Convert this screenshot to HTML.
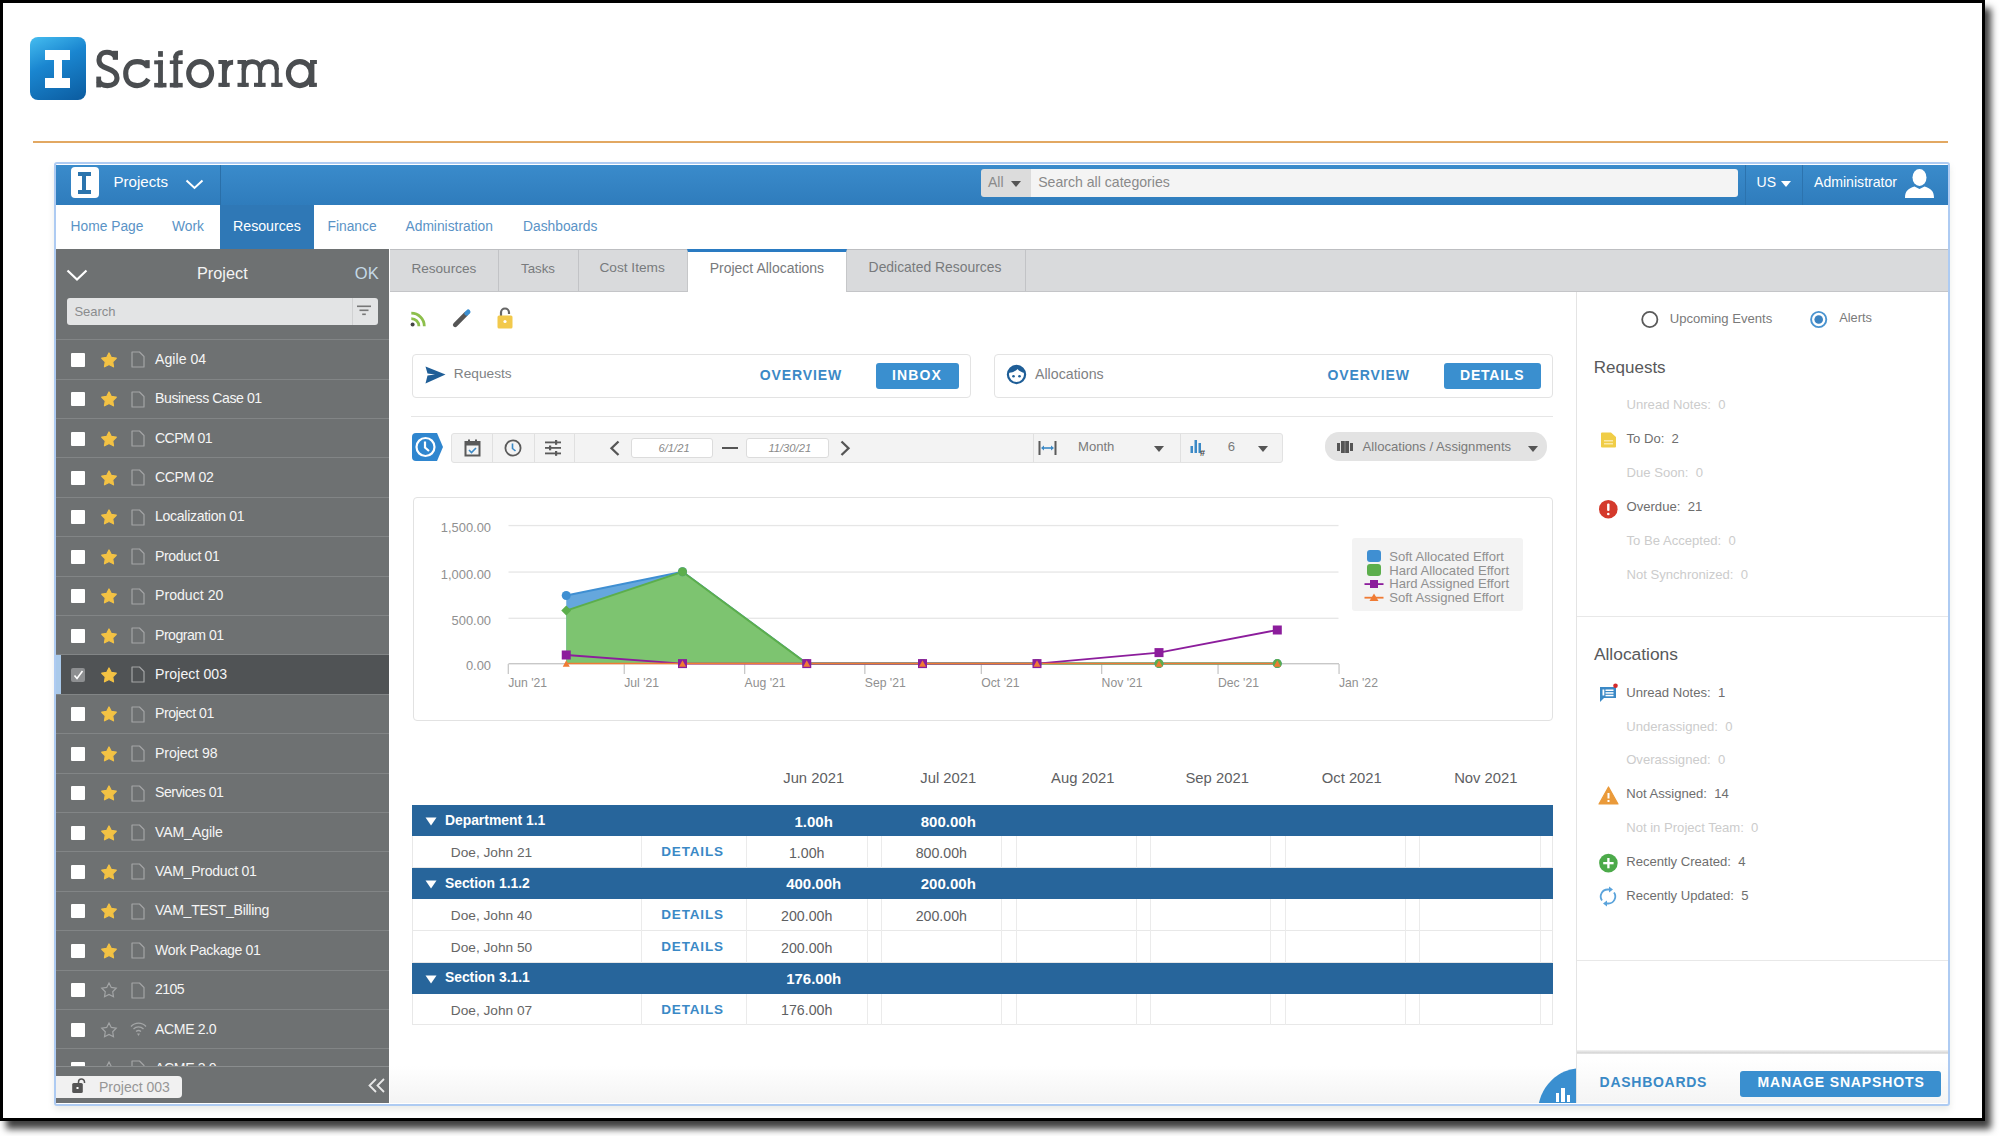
<!DOCTYPE html>
<html><head><meta charset="utf-8">
<style>
*{box-sizing:border-box;margin:0;padding:0}
html,body{width:2000px;height:1136px;overflow:hidden;background:#fff;font-family:"Liberation Sans",sans-serif}
.a{position:absolute}
.t{position:absolute;white-space:nowrap;line-height:1}
svg{position:absolute;overflow:visible}
</style></head><body>
<div class="a" style="left:0;top:0;width:1985px;height:1121px;border:3px solid #000;box-shadow:6px 8px 7px rgba(0,0,0,.75)"></div>
<div class="a" style="left:30.0px;top:37.0px;width:56.0px;height:63.0px;border-radius:8px;background:linear-gradient(155deg,#45bdf0 0%,#1a86d0 40%,#0b5b9f 100%)"></div>
<div class="a" style="left:45.0px;top:50.0px;width:25.0px;height:10.0px;background:#fff"></div>
<div class="a" style="left:53.5px;top:50.0px;width:8.5px;height:38.0px;background:#fff"></div>
<div class="a" style="left:45.0px;top:78.0px;width:25.0px;height:10.0px;background:#fff"></div>
<svg style="left:0;top:0" width="330" height="100" viewBox="0 0 330 100"><g fill="#4a4d50"><path d="M115.2,56.5 C113,53.5 110,52.3 107,52.3 C101.5,52.3 99,55.5 99,60 C99,65 102.5,66.8 107.5,68.5 C113.5,70.5 117,72.8 117,78 C117,83 112.5,85.6 107.5,85.6 C103,85.6 100,84 98.7,81" fill="none" stroke="#4a4d50" stroke-width="5.1"/><rect x="112.8" y="50.8" width="5.2" height="9"/><rect x="96.3" y="76.6" width="4.8" height="10.8"/><path d="M146.8,66.2 C145,62.8 141.5,61.6 137.2,61.6 C130,61.6 125.7,66.5 125.7,73.6 C125.7,80.7 130,85.6 137.2,85.6 C142,85.6 145.6,83.5 148.4,79" fill="none" stroke="#4a4d50" stroke-width="5.1"/><rect x="145.2" y="60.1" width="4.5" height="8.1"/><rect x="158.1" y="51.1" width="4.8" height="5.7"/><rect x="158.1" y="60.4" width="4.8" height="27"/><rect x="154.2" y="60.4" width="8.7" height="3.9"/><rect x="154.2" y="82.9" width="12.3" height="4.5"/><rect x="173.4" y="56" width="4.8" height="31.5"/><path d="M175.8,58 C175.8,53.5 177.5,52.45 182.7,52.45" fill="none" stroke="#4a4d50" stroke-width="5.1"/><rect x="169.8" y="60.4" width="12.9" height="3.6"/><rect x="169.8" y="82.9" width="12.9" height="4.5"/><ellipse cx="200.15" cy="73.6" rx="11.45" ry="12" fill="none" stroke="#4a4d50" stroke-width="5.1"/><rect x="221.9" y="60" width="5" height="27"/><rect x="218.4" y="60" width="8.5" height="4"/><rect x="218.4" y="82.8" width="11.3" height="4.1"/><path d="M224.4,71 C225.5,64 228.5,62.3 233.1,62.3" fill="none" stroke="#4a4d50" stroke-width="5.1"/><rect x="241.6" y="60" width="4.3" height="27"/><rect x="258.1" y="68" width="4.1" height="19"/><rect x="274.7" y="68" width="4.05" height="19"/><rect x="237.5" y="60" width="8.4" height="4"/><rect x="237.5" y="82.8" width="11.25" height="4.1"/><rect x="254" y="82.8" width="11.6" height="4.1"/><rect x="271.25" y="82.8" width="11.25" height="4.1"/><path d="M243.75,70 C244.5,63.5 248,61.6 252,61.6 C257,61.6 260.15,63.5 260.15,69.5" fill="none" stroke="#4a4d50" stroke-width="4.6"/><path d="M260.15,70 C261,63.5 264.5,61.6 268.5,61.6 C273.5,61.6 276.7,63.5 276.7,69.5" fill="none" stroke="#4a4d50" stroke-width="4.6"/><ellipse cx="299.8" cy="73.6" rx="11.4" ry="12" fill="none" stroke="#4a4d50" stroke-width="5.1"/><rect x="310" y="60" width="4.4" height="27"/><rect x="310" y="60" width="6.9" height="4"/><rect x="309" y="82.8" width="7.9" height="4.1"/></g></svg>
<div class="a" style="left:33.0px;top:141.0px;width:1915.0px;height:2.0px;background:#e2a862"></div>
<div class="a" style="left:54.0px;top:162.0px;width:1896.0px;height:944.0px;border:2px solid #aecbf2;border-radius:3px;background:#fff;box-shadow:0 4px 6px rgba(120,130,110,.15)"></div>
<div class="a" style="left:56.0px;top:164.5px;width:1892.0px;height:40.0px;background:linear-gradient(#3a8bcb,#2f7cbc)"></div>
<div class="a" style="left:70.6px;top:166.8px;width:28.0px;height:31.0px;background:#fff;border-radius:4px"></div>
<div class="a" style="left:78.0px;top:171.5px;width:12.5px;height:4.0px;background:#2b74ad"></div>
<div class="a" style="left:82.3px;top:171.5px;width:4.0px;height:22.0px;background:#2b74ad"></div>
<div class="a" style="left:78.0px;top:189.5px;width:12.5px;height:4.0px;background:#2b74ad"></div>
<div class="t" style="left:113.5px;top:174.4px;font-size:15.1px;color:#fff;">Projects</div>
<svg style="left:185px;top:179px" width="19" height="11"><polyline points="1.5,1.5 9.5,9 17.5,1.5" fill="none" stroke="#fff" stroke-width="2"/></svg>
<div class="a" style="left:220.0px;top:164.5px;width:1.0px;height:40.0px;background:#2a6fa8"></div>
<div class="a" style="left:981.4px;top:169.2px;width:49.5px;height:27.8px;background:#dcdcdc;border-radius:3px 0 0 3px"></div>
<div class="t" style="left:988.0px;top:174.7px;font-size:14px;color:#8a8a8a;">All</div>
<svg style="left:1011px;top:181px" width="11" height="7"><polygon points="0,0 10,0 5,6" fill="#555"/></svg>
<div class="a" style="left:1030.6px;top:169.2px;width:707.0px;height:27.8px;background:#f4f4f4;border-radius:0 3px 3px 0"></div>
<div class="t" style="left:1038.2px;top:174.7px;font-size:14.1px;color:#8a8a8a;">Search all categories</div>
<div class="a" style="left:1744.5px;top:164.5px;width:1.0px;height:40.0px;background:#2c73ae"></div>
<div class="t" style="left:1756.6px;top:174.7px;font-size:14px;color:#fff;">US</div>
<svg style="left:1781px;top:181px" width="11" height="7"><polygon points="0,0 10,0 5,6" fill="#fff"/></svg>
<div class="a" style="left:1801.5px;top:164.5px;width:1.0px;height:40.0px;background:#2c73ae"></div>
<div class="t" style="left:1814.0px;top:174.7px;font-size:14.1px;color:#fff;">Administrator</div>
<svg style="left:1905px;top:169px" width="29" height="29" viewBox="0 0 29 29"><ellipse cx="14.5" cy="8.5" rx="7" ry="8.5" fill="#fff"/><path d="M0,29 C0,22 3,19.5 9.5,17.5 L14.5,20 L19.5,17.5 C26,19.5 29,22 29,29 Z" fill="#fff"/></svg>
<div class="a" style="left:220.0px;top:204.5px;width:94.0px;height:44.5px;background:#2f78b6"></div>
<div class="t" style="left:70.6px;top:219.5px;font-size:13.8px;color:#5a93c6;">Home Page</div>
<div class="t" style="left:172.0px;top:219.5px;font-size:13.8px;color:#5a93c6;">Work</div>
<div class="t" style="left:327.5px;top:219.5px;font-size:13.8px;color:#5a93c6;">Finance</div>
<div class="t" style="left:405.5px;top:219.5px;font-size:13.8px;color:#5a93c6;">Administration</div>
<div class="t" style="left:523.0px;top:219.5px;font-size:13.8px;color:#5a93c6;">Dashboards</div>
<div class="t" style="left:233.0px;top:219.2px;font-size:14.2px;color:#fff;">Resources</div>
<div class="a" style="left:56.0px;top:249.0px;width:333.0px;height:854.0px;background:#6e7172"></div>
<svg style="left:66px;top:269px" width="22" height="13"><polyline points="1.5,1.5 11,10.5 20.5,1.5" fill="none" stroke="#fff" stroke-width="2.2"/></svg>
<div class="t" style="left:197.0px;top:264.8px;font-size:16.3px;color:#f4f4f4;">Project</div>
<div class="t" style="left:354.8px;top:264.6px;font-size:16.5px;color:#c5d9e6;">OK</div>
<div class="a" style="left:67.4px;top:297.6px;width:310.5px;height:27.2px;background:#e3e4e5;border-radius:3px"></div>
<div class="a" style="left:352.0px;top:298.0px;width:1.0px;height:26.5px;background:#d0d1d2"></div>
<div class="t" style="left:74.4px;top:304.6px;font-size:13px;color:#8a8c8e;">Search</div>
<svg style="left:357px;top:305px" width="15" height="12"><rect x="0" y="0.5" width="14" height="1.6" fill="#777"/><rect x="2.5" y="4.5" width="9" height="1.6" fill="#777"/><rect x="5.2" y="8.5" width="3.6" height="1.6" fill="#777"/></svg>
<div class="a" style="left:56px;top:339px;width:333px;height:727px;overflow:hidden">
<div class="a" style="left:0.0px;top:0.2px;width:333.0px;height:1.0px;background:#828586"></div>
<div class="a" style="left:15.0px;top:13.7px;width:14.0px;height:14.0px;background:#fff;border-radius:1px"></div>
<svg style="left:45px;top:12.7px" width="16" height="16" viewBox="0 0 16 16"><path d="M8.00,1.00 L10.29,5.44 L15.23,6.25 L11.71,9.81 L12.47,14.75 L8.00,12.50 L3.53,14.75 L4.29,9.81 L0.77,6.25 L5.71,5.44 Z" fill="#f3c244" stroke="#f3c244" stroke-width="1.3" stroke-linejoin="round"/></svg>
<svg style="left:75px;top:12.2px" width="14" height="17" viewBox="0 0 14 17"><path d="M1,1 L8.5,1 L13,5.5 L13,16 L1,16 Z" fill="none" stroke="#a3a5a6" stroke-width="1.2" stroke-linejoin="round"/></svg>
<div class="t" style="left:99.0px;top:12.7px;font-size:14.1px;color:#f5f5f5;letter-spacing:0.04px">Agile 04</div>
<div class="a" style="left:0.0px;top:39.6px;width:333.0px;height:1.0px;background:#828586"></div>
<div class="a" style="left:15.0px;top:53.1px;width:14.0px;height:14.0px;background:#fff;border-radius:1px"></div>
<svg style="left:45px;top:52.1px" width="16" height="16" viewBox="0 0 16 16"><path d="M8.00,1.00 L10.29,5.44 L15.23,6.25 L11.71,9.81 L12.47,14.75 L8.00,12.50 L3.53,14.75 L4.29,9.81 L0.77,6.25 L5.71,5.44 Z" fill="#f3c244" stroke="#f3c244" stroke-width="1.3" stroke-linejoin="round"/></svg>
<svg style="left:75px;top:51.6px" width="14" height="17" viewBox="0 0 14 17"><path d="M1,1 L8.5,1 L13,5.5 L13,16 L1,16 Z" fill="none" stroke="#a3a5a6" stroke-width="1.2" stroke-linejoin="round"/></svg>
<div class="t" style="left:99.0px;top:52.1px;font-size:14.1px;color:#f5f5f5;letter-spacing:-0.43px">Business Case 01</div>
<div class="a" style="left:0.0px;top:79.0px;width:333.0px;height:1.0px;background:#828586"></div>
<div class="a" style="left:15.0px;top:92.5px;width:14.0px;height:14.0px;background:#fff;border-radius:1px"></div>
<svg style="left:45px;top:91.5px" width="16" height="16" viewBox="0 0 16 16"><path d="M8.00,1.00 L10.29,5.44 L15.23,6.25 L11.71,9.81 L12.47,14.75 L8.00,12.50 L3.53,14.75 L4.29,9.81 L0.77,6.25 L5.71,5.44 Z" fill="#f3c244" stroke="#f3c244" stroke-width="1.3" stroke-linejoin="round"/></svg>
<svg style="left:75px;top:91.0px" width="14" height="17" viewBox="0 0 14 17"><path d="M1,1 L8.5,1 L13,5.5 L13,16 L1,16 Z" fill="none" stroke="#a3a5a6" stroke-width="1.2" stroke-linejoin="round"/></svg>
<div class="t" style="left:99.0px;top:91.5px;font-size:14.1px;color:#f5f5f5;letter-spacing:-0.6px">CCPM 01</div>
<div class="a" style="left:0.0px;top:118.4px;width:333.0px;height:1.0px;background:#828586"></div>
<div class="a" style="left:15.0px;top:131.9px;width:14.0px;height:14.0px;background:#fff;border-radius:1px"></div>
<svg style="left:45px;top:130.9px" width="16" height="16" viewBox="0 0 16 16"><path d="M8.00,1.00 L10.29,5.44 L15.23,6.25 L11.71,9.81 L12.47,14.75 L8.00,12.50 L3.53,14.75 L4.29,9.81 L0.77,6.25 L5.71,5.44 Z" fill="#f3c244" stroke="#f3c244" stroke-width="1.3" stroke-linejoin="round"/></svg>
<svg style="left:75px;top:130.4px" width="14" height="17" viewBox="0 0 14 17"><path d="M1,1 L8.5,1 L13,5.5 L13,16 L1,16 Z" fill="none" stroke="#a3a5a6" stroke-width="1.2" stroke-linejoin="round"/></svg>
<div class="t" style="left:99.0px;top:130.9px;font-size:14.1px;color:#f5f5f5;letter-spacing:-0.37px">CCPM 02</div>
<div class="a" style="left:0.0px;top:157.8px;width:333.0px;height:1.0px;background:#828586"></div>
<div class="a" style="left:15.0px;top:171.3px;width:14.0px;height:14.0px;background:#fff;border-radius:1px"></div>
<svg style="left:45px;top:170.3px" width="16" height="16" viewBox="0 0 16 16"><path d="M8.00,1.00 L10.29,5.44 L15.23,6.25 L11.71,9.81 L12.47,14.75 L8.00,12.50 L3.53,14.75 L4.29,9.81 L0.77,6.25 L5.71,5.44 Z" fill="#f3c244" stroke="#f3c244" stroke-width="1.3" stroke-linejoin="round"/></svg>
<svg style="left:75px;top:169.8px" width="14" height="17" viewBox="0 0 14 17"><path d="M1,1 L8.5,1 L13,5.5 L13,16 L1,16 Z" fill="none" stroke="#a3a5a6" stroke-width="1.2" stroke-linejoin="round"/></svg>
<div class="t" style="left:99.0px;top:170.3px;font-size:14.1px;color:#f5f5f5;letter-spacing:-0.31px">Localization 01</div>
<div class="a" style="left:0.0px;top:197.2px;width:333.0px;height:1.0px;background:#828586"></div>
<div class="a" style="left:15.0px;top:210.7px;width:14.0px;height:14.0px;background:#fff;border-radius:1px"></div>
<svg style="left:45px;top:209.7px" width="16" height="16" viewBox="0 0 16 16"><path d="M8.00,1.00 L10.29,5.44 L15.23,6.25 L11.71,9.81 L12.47,14.75 L8.00,12.50 L3.53,14.75 L4.29,9.81 L0.77,6.25 L5.71,5.44 Z" fill="#f3c244" stroke="#f3c244" stroke-width="1.3" stroke-linejoin="round"/></svg>
<svg style="left:75px;top:209.2px" width="14" height="17" viewBox="0 0 14 17"><path d="M1,1 L8.5,1 L13,5.5 L13,16 L1,16 Z" fill="none" stroke="#a3a5a6" stroke-width="1.2" stroke-linejoin="round"/></svg>
<div class="t" style="left:99.0px;top:209.7px;font-size:14.1px;color:#f5f5f5;letter-spacing:-0.38px">Product 01</div>
<div class="a" style="left:0.0px;top:236.6px;width:333.0px;height:1.0px;background:#828586"></div>
<div class="a" style="left:15.0px;top:250.1px;width:14.0px;height:14.0px;background:#fff;border-radius:1px"></div>
<svg style="left:45px;top:249.1px" width="16" height="16" viewBox="0 0 16 16"><path d="M8.00,1.00 L10.29,5.44 L15.23,6.25 L11.71,9.81 L12.47,14.75 L8.00,12.50 L3.53,14.75 L4.29,9.81 L0.77,6.25 L5.71,5.44 Z" fill="#f3c244" stroke="#f3c244" stroke-width="1.3" stroke-linejoin="round"/></svg>
<svg style="left:75px;top:248.6px" width="14" height="17" viewBox="0 0 14 17"><path d="M1,1 L8.5,1 L13,5.5 L13,16 L1,16 Z" fill="none" stroke="#a3a5a6" stroke-width="1.2" stroke-linejoin="round"/></svg>
<div class="t" style="left:99.0px;top:249.1px;font-size:14.1px;color:#f5f5f5;letter-spacing:0.02px">Product 20</div>
<div class="a" style="left:0.0px;top:276.0px;width:333.0px;height:1.0px;background:#828586"></div>
<div class="a" style="left:15.0px;top:289.5px;width:14.0px;height:14.0px;background:#fff;border-radius:1px"></div>
<svg style="left:45px;top:288.5px" width="16" height="16" viewBox="0 0 16 16"><path d="M8.00,1.00 L10.29,5.44 L15.23,6.25 L11.71,9.81 L12.47,14.75 L8.00,12.50 L3.53,14.75 L4.29,9.81 L0.77,6.25 L5.71,5.44 Z" fill="#f3c244" stroke="#f3c244" stroke-width="1.3" stroke-linejoin="round"/></svg>
<svg style="left:75px;top:288.0px" width="14" height="17" viewBox="0 0 14 17"><path d="M1,1 L8.5,1 L13,5.5 L13,16 L1,16 Z" fill="none" stroke="#a3a5a6" stroke-width="1.2" stroke-linejoin="round"/></svg>
<div class="t" style="left:99.0px;top:288.5px;font-size:14.1px;color:#f5f5f5;letter-spacing:-0.51px">Program 01</div>
<div class="a" style="left:0.0px;top:315.9px;width:333.0px;height:39.4px;background:#505355"></div>
<div class="a" style="left:0.0px;top:315.9px;width:5.0px;height:39.4px;background:#a9c9ea"></div>
<div class="a" style="left:0.0px;top:315.4px;width:333.0px;height:1.0px;background:#828586"></div>
<div class="a" style="left:15.0px;top:329.4px;width:14.0px;height:14.0px;background:#8d8f91;border-radius:2px"></div>
<svg style="left:17px;top:331.4px" width="11" height="10"><polyline points="1.5,5.5 4,8.5 9.5,1" fill="none" stroke="#fff" stroke-width="1.6"/></svg>
<svg style="left:45px;top:327.9px" width="16" height="16" viewBox="0 0 16 16"><path d="M8.00,1.00 L10.29,5.44 L15.23,6.25 L11.71,9.81 L12.47,14.75 L8.00,12.50 L3.53,14.75 L4.29,9.81 L0.77,6.25 L5.71,5.44 Z" fill="#f3c244" stroke="#f3c244" stroke-width="1.3" stroke-linejoin="round"/></svg>
<svg style="left:75px;top:327.4px" width="14" height="17" viewBox="0 0 14 17"><path d="M1,1 L8.5,1 L13,5.5 L13,16 L1,16 Z" fill="none" stroke="#a3a5a6" stroke-width="1.2" stroke-linejoin="round"/></svg>
<div class="t" style="left:99.0px;top:327.9px;font-size:14.1px;color:#f5f5f5;letter-spacing:0.08px">Project 003</div>
<div class="a" style="left:0.0px;top:354.8px;width:333.0px;height:1.0px;background:#828586"></div>
<div class="a" style="left:15.0px;top:368.3px;width:14.0px;height:14.0px;background:#fff;border-radius:1px"></div>
<svg style="left:45px;top:367.3px" width="16" height="16" viewBox="0 0 16 16"><path d="M8.00,1.00 L10.29,5.44 L15.23,6.25 L11.71,9.81 L12.47,14.75 L8.00,12.50 L3.53,14.75 L4.29,9.81 L0.77,6.25 L5.71,5.44 Z" fill="#f3c244" stroke="#f3c244" stroke-width="1.3" stroke-linejoin="round"/></svg>
<svg style="left:75px;top:366.8px" width="14" height="17" viewBox="0 0 14 17"><path d="M1,1 L8.5,1 L13,5.5 L13,16 L1,16 Z" fill="none" stroke="#a3a5a6" stroke-width="1.2" stroke-linejoin="round"/></svg>
<div class="t" style="left:99.0px;top:367.3px;font-size:14.1px;color:#f5f5f5;letter-spacing:-0.46px">Project 01</div>
<div class="a" style="left:0.0px;top:394.2px;width:333.0px;height:1.0px;background:#828586"></div>
<div class="a" style="left:15.0px;top:407.7px;width:14.0px;height:14.0px;background:#fff;border-radius:1px"></div>
<svg style="left:45px;top:406.7px" width="16" height="16" viewBox="0 0 16 16"><path d="M8.00,1.00 L10.29,5.44 L15.23,6.25 L11.71,9.81 L12.47,14.75 L8.00,12.50 L3.53,14.75 L4.29,9.81 L0.77,6.25 L5.71,5.44 Z" fill="#f3c244" stroke="#f3c244" stroke-width="1.3" stroke-linejoin="round"/></svg>
<svg style="left:75px;top:406.2px" width="14" height="17" viewBox="0 0 14 17"><path d="M1,1 L8.5,1 L13,5.5 L13,16 L1,16 Z" fill="none" stroke="#a3a5a6" stroke-width="1.2" stroke-linejoin="round"/></svg>
<div class="t" style="left:99.0px;top:406.7px;font-size:14.1px;color:#f5f5f5;letter-spacing:-0.1px">Project 98</div>
<div class="a" style="left:0.0px;top:433.6px;width:333.0px;height:1.0px;background:#828586"></div>
<div class="a" style="left:15.0px;top:447.1px;width:14.0px;height:14.0px;background:#fff;border-radius:1px"></div>
<svg style="left:45px;top:446.1px" width="16" height="16" viewBox="0 0 16 16"><path d="M8.00,1.00 L10.29,5.44 L15.23,6.25 L11.71,9.81 L12.47,14.75 L8.00,12.50 L3.53,14.75 L4.29,9.81 L0.77,6.25 L5.71,5.44 Z" fill="#f3c244" stroke="#f3c244" stroke-width="1.3" stroke-linejoin="round"/></svg>
<svg style="left:75px;top:445.6px" width="14" height="17" viewBox="0 0 14 17"><path d="M1,1 L8.5,1 L13,5.5 L13,16 L1,16 Z" fill="none" stroke="#a3a5a6" stroke-width="1.2" stroke-linejoin="round"/></svg>
<div class="t" style="left:99.0px;top:446.1px;font-size:14.1px;color:#f5f5f5;letter-spacing:-0.47px">Services 01</div>
<div class="a" style="left:0.0px;top:473.0px;width:333.0px;height:1.0px;background:#828586"></div>
<div class="a" style="left:15.0px;top:486.5px;width:14.0px;height:14.0px;background:#fff;border-radius:1px"></div>
<svg style="left:45px;top:485.5px" width="16" height="16" viewBox="0 0 16 16"><path d="M8.00,1.00 L10.29,5.44 L15.23,6.25 L11.71,9.81 L12.47,14.75 L8.00,12.50 L3.53,14.75 L4.29,9.81 L0.77,6.25 L5.71,5.44 Z" fill="#f3c244" stroke="#f3c244" stroke-width="1.3" stroke-linejoin="round"/></svg>
<svg style="left:75px;top:485.0px" width="14" height="17" viewBox="0 0 14 17"><path d="M1,1 L8.5,1 L13,5.5 L13,16 L1,16 Z" fill="none" stroke="#a3a5a6" stroke-width="1.2" stroke-linejoin="round"/></svg>
<div class="t" style="left:99.0px;top:485.5px;font-size:14.1px;color:#f5f5f5;letter-spacing:-0.09px">VAM_Agile</div>
<div class="a" style="left:0.0px;top:512.4px;width:333.0px;height:1.0px;background:#828586"></div>
<div class="a" style="left:15.0px;top:525.9px;width:14.0px;height:14.0px;background:#fff;border-radius:1px"></div>
<svg style="left:45px;top:524.9px" width="16" height="16" viewBox="0 0 16 16"><path d="M8.00,1.00 L10.29,5.44 L15.23,6.25 L11.71,9.81 L12.47,14.75 L8.00,12.50 L3.53,14.75 L4.29,9.81 L0.77,6.25 L5.71,5.44 Z" fill="#f3c244" stroke="#f3c244" stroke-width="1.3" stroke-linejoin="round"/></svg>
<svg style="left:75px;top:524.4px" width="14" height="17" viewBox="0 0 14 17"><path d="M1,1 L8.5,1 L13,5.5 L13,16 L1,16 Z" fill="none" stroke="#a3a5a6" stroke-width="1.2" stroke-linejoin="round"/></svg>
<div class="t" style="left:99.0px;top:524.9px;font-size:14.1px;color:#f5f5f5;letter-spacing:-0.28px">VAM_Product 01</div>
<div class="a" style="left:0.0px;top:551.8px;width:333.0px;height:1.0px;background:#828586"></div>
<div class="a" style="left:15.0px;top:565.3px;width:14.0px;height:14.0px;background:#fff;border-radius:1px"></div>
<svg style="left:45px;top:564.3px" width="16" height="16" viewBox="0 0 16 16"><path d="M8.00,1.00 L10.29,5.44 L15.23,6.25 L11.71,9.81 L12.47,14.75 L8.00,12.50 L3.53,14.75 L4.29,9.81 L0.77,6.25 L5.71,5.44 Z" fill="#f3c244" stroke="#f3c244" stroke-width="1.3" stroke-linejoin="round"/></svg>
<svg style="left:75px;top:563.8px" width="14" height="17" viewBox="0 0 14 17"><path d="M1,1 L8.5,1 L13,5.5 L13,16 L1,16 Z" fill="none" stroke="#a3a5a6" stroke-width="1.2" stroke-linejoin="round"/></svg>
<div class="t" style="left:99.0px;top:564.3px;font-size:14.1px;color:#f5f5f5;letter-spacing:-0.29px">VAM_TEST_Billing</div>
<div class="a" style="left:0.0px;top:591.2px;width:333.0px;height:1.0px;background:#828586"></div>
<div class="a" style="left:15.0px;top:604.7px;width:14.0px;height:14.0px;background:#fff;border-radius:1px"></div>
<svg style="left:45px;top:603.7px" width="16" height="16" viewBox="0 0 16 16"><path d="M8.00,1.00 L10.29,5.44 L15.23,6.25 L11.71,9.81 L12.47,14.75 L8.00,12.50 L3.53,14.75 L4.29,9.81 L0.77,6.25 L5.71,5.44 Z" fill="#f3c244" stroke="#f3c244" stroke-width="1.3" stroke-linejoin="round"/></svg>
<svg style="left:75px;top:603.2px" width="14" height="17" viewBox="0 0 14 17"><path d="M1,1 L8.5,1 L13,5.5 L13,16 L1,16 Z" fill="none" stroke="#a3a5a6" stroke-width="1.2" stroke-linejoin="round"/></svg>
<div class="t" style="left:99.0px;top:603.7px;font-size:14.1px;color:#f5f5f5;letter-spacing:-0.36px">Work Package 01</div>
<div class="a" style="left:0.0px;top:630.6px;width:333.0px;height:1.0px;background:#828586"></div>
<div class="a" style="left:15.0px;top:644.1px;width:14.0px;height:14.0px;background:#fff;border-radius:1px"></div>
<svg style="left:45px;top:643.1px" width="16" height="16" viewBox="0 0 16 16"><path d="M8.00,1.00 L10.29,5.44 L15.23,6.25 L11.71,9.81 L12.47,14.75 L8.00,12.50 L3.53,14.75 L4.29,9.81 L0.77,6.25 L5.71,5.44 Z" fill="none" stroke="#a3a5a6" stroke-width="1.2"/></svg>
<svg style="left:75px;top:642.6px" width="14" height="17" viewBox="0 0 14 17"><path d="M1,1 L8.5,1 L13,5.5 L13,16 L1,16 Z" fill="none" stroke="#a3a5a6" stroke-width="1.2" stroke-linejoin="round"/></svg>
<div class="t" style="left:99.0px;top:643.1px;font-size:14.1px;color:#f5f5f5;letter-spacing:-0.6px">2105</div>
<div class="a" style="left:0.0px;top:670.0px;width:333.0px;height:1.0px;background:#828586"></div>
<div class="a" style="left:15.0px;top:683.5px;width:14.0px;height:14.0px;background:#fff;border-radius:1px"></div>
<svg style="left:45px;top:682.5px" width="16" height="16" viewBox="0 0 16 16"><path d="M8.00,1.00 L10.29,5.44 L15.23,6.25 L11.71,9.81 L12.47,14.75 L8.00,12.50 L3.53,14.75 L4.29,9.81 L0.77,6.25 L5.71,5.44 Z" fill="none" stroke="#a3a5a6" stroke-width="1.2"/></svg>
<svg style="left:74px;top:681.5px" width="17" height="16" viewBox="0 0 17 16"><path d="M1,5.5 A10,10 0 0 1 16,5.5" fill="none" stroke="#a3a5a6" stroke-width="1.3"/><path d="M3.5,8 A7,7 0 0 1 13.5,8" fill="none" stroke="#a3a5a6" stroke-width="1.3"/><path d="M6,10.5 A4,4 0 0 1 11,10.5" fill="none" stroke="#a3a5a6" stroke-width="1.3"/><path d="M7,12.5 L10,12.5 L8.5,15 Z" fill="#a3a5a6"/></svg>
<div class="t" style="left:99.0px;top:682.5px;font-size:14.1px;color:#f5f5f5;letter-spacing:-0.39px">ACME 2.0</div>
<div class="a" style="left:0.0px;top:709.4px;width:333.0px;height:1.0px;background:#828586"></div>
<div class="a" style="left:15.0px;top:722.9px;width:14.0px;height:14.0px;background:#fff;border-radius:1px"></div>
<svg style="left:45px;top:721.9px" width="16" height="16" viewBox="0 0 16 16"><path d="M8.00,1.00 L10.29,5.44 L15.23,6.25 L11.71,9.81 L12.47,14.75 L8.00,12.50 L3.53,14.75 L4.29,9.81 L0.77,6.25 L5.71,5.44 Z" fill="none" stroke="#a3a5a6" stroke-width="1.2"/></svg>
<svg style="left:75px;top:721.4px" width="14" height="17" viewBox="0 0 14 17"><path d="M1,1 L8.5,1 L13,5.5 L13,16 L1,16 Z" fill="none" stroke="#a3a5a6" stroke-width="1.2" stroke-linejoin="round"/></svg>
<div class="t" style="left:99.0px;top:721.9px;font-size:14.1px;color:#f5f5f5;letter-spacing:-0.39px">ACME 3.0</div>
</div>
<div class="a" style="left:56.0px;top:1065.5px;width:333.0px;height:1.5px;background:#8a8d8e"></div>
<div class="a" style="left:56.0px;top:1076.0px;width:126.0px;height:22.0px;background:#f1f1f1;border-radius:0 4px 4px 0"></div>
<svg style="left:72px;top:1078px" width="14" height="16" viewBox="0 0 14 16"><rect x="0.2" y="5" width="10.6" height="10" rx="1.5" fill="#555"/><path d="M6.5,5.5 L6.5,4 A3,3 0 0 1 12.5,4 L12.5,5" fill="none" stroke="#555" stroke-width="1.5"/><rect x="4.5" y="9" width="2" height="2" fill="#fff"/></svg>
<div class="t" style="left:99.0px;top:1079.6px;font-size:14px;color:#969696;">Project 003</div>
<svg style="left:368px;top:1078px" width="18" height="15" viewBox="0 0 18 15"><polyline points="8,1 1.5,7.5 8,14" fill="none" stroke="#e8e8e8" stroke-width="1.8"/><polyline points="16,1 9.5,7.5 16,14" fill="none" stroke="#e8e8e8" stroke-width="1.8"/></svg>
<div class="a" style="left:389.5px;top:249.0px;width:1558.5px;height:42.5px;background:#d9dadc;border-top:1.5px solid #bdbec1;border-bottom:1px solid #c4c5c8"></div>
<div class="a" style="left:497.8px;top:250.0px;width:1.0px;height:41.0px;background:#c2c3c6"></div>
<div class="a" style="left:577.8px;top:250.0px;width:1.0px;height:41.0px;background:#c2c3c6"></div>
<div class="a" style="left:1024.5px;top:250.0px;width:1.0px;height:41.0px;background:#c2c3c6"></div>
<div class="a" style="left:687.3px;top:249.0px;width:160.0px;height:43.0px;background:#fff;border-top:3px solid #2a7bc2;border-left:1px solid #c6c7c9;border-right:1px solid #c6c7c9"></div>
<div class="t" style="left:411.4px;top:261.5px;font-size:13.6px;color:#787a7c;">Resources</div>
<div class="t" style="left:521.0px;top:261.7px;font-size:13.3px;color:#787a7c;">Tasks</div>
<div class="t" style="left:599.4px;top:261.4px;font-size:13.7px;color:#787a7c;">Cost Items</div>
<div class="t" style="left:709.7px;top:261.1px;font-size:14px;color:#787a7c;">Project Allocations</div>
<div class="t" style="left:868.6px;top:261.2px;font-size:13.9px;color:#787a7c;">Dedicated Resources</div>
<div class="a" style="left:1576.0px;top:291.5px;width:1.0px;height:811.0px;background:#e4e4e4"></div>
<svg style="left:410px;top:311px" width="17" height="17" viewBox="0 0 17 17"><circle cx="2.6" cy="13.6" r="2" fill="#444"/><path d="M1.3,7.6 A7.6,7.6 0 0 1 8.9,15.2" fill="none" stroke="#8dbf4b" stroke-width="2.8"/><path d="M1.3,2.2 A13,13 0 0 1 14.3,15.2" fill="none" stroke="#8dbf4b" stroke-width="2.8"/></svg>
<svg style="left:452px;top:309px" width="19" height="19" viewBox="0 0 19 19"><line x1="3.2" y1="15.8" x2="13.8" y2="5.2" stroke="#555" stroke-width="4.6" stroke-linecap="round"/><line x1="14.6" y1="4.4" x2="16.2" y2="2.8" stroke="#3c8fd0" stroke-width="4.6" stroke-linecap="round"/></svg>
<svg style="left:496px;top:307px" width="18" height="22" viewBox="0 0 18 22"><path d="M5,9 L5,5.5 A4,4 0 0 1 13,5.5 L13,7" fill="none" stroke="#666" stroke-width="2.2"/><rect x="1.5" y="8.5" width="15" height="13" rx="1.5" fill="#f2c94c"/><circle cx="9" cy="14.5" r="1.6" fill="#fff"/></svg>
<div class="a" style="left:412.0px;top:354.0px;width:559.0px;height:44.0px;border:1.5px solid #e3e3e3;border-radius:4px;background:#fff"></div>
<svg style="left:425px;top:366px" width="21" height="18" viewBox="0 0 21 18"><path d="M0.5,0.5 L20.5,8.5 L0.5,17.5 L2.5,9.5 L10,8.5 L2.5,7.5 Z" fill="#1f5e97"/></svg>
<div class="t" style="left:453.8px;top:367.0px;font-size:13.7px;color:#808284;">Requests</div>
<div class="t" style="left:759.8px;top:367.7px;font-size:14px;color:#3b89c6;font-weight:bold;letter-spacing:0.9px">OVERVIEW</div>
<div class="a" style="left:875.6px;top:362.6px;width:83.1px;height:26.8px;background:#3a8fcf;border-radius:3px"></div>
<div class="t" style="left:891.9px;top:367.7px;font-size:14px;color:#fff;font-weight:bold;letter-spacing:1.15px">INBOX</div>
<div class="a" style="left:993.5px;top:354.0px;width:559.5px;height:44.0px;border:1.5px solid #e3e3e3;border-radius:4px;background:#fff"></div>
<svg style="left:1006px;top:364px" width="21" height="21" viewBox="0 0 21 21"><circle cx="10.5" cy="10.5" r="8.6" fill="#fff" stroke="#1f5e97" stroke-width="2.2"/><path d="M2.2,9 C3,3.5 7,1.8 10.5,1.8 C14,1.8 18,3.5 18.8,9 C16,8.5 13,7 11.5,5 C10,7 6,8.8 2.2,9 Z" fill="#1f5e97"/><circle cx="7.5" cy="12.2" r="1.3" fill="#1f5e97"/><circle cx="13.5" cy="12.2" r="1.3" fill="#1f5e97"/></svg>
<div class="t" style="left:1035.0px;top:366.6px;font-size:14.2px;color:#808284;">Allocations</div>
<div class="t" style="left:1327.5px;top:367.7px;font-size:14px;color:#3b89c6;font-weight:bold;letter-spacing:0.9px">OVERVIEW</div>
<div class="a" style="left:1444.0px;top:362.6px;width:97.0px;height:26.8px;background:#3a8fcf;border-radius:3px"></div>
<div class="t" style="left:1460.0px;top:367.7px;font-size:14px;color:#fff;font-weight:bold;letter-spacing:0.77px">DETAILS</div>
<div class="a" style="left:411.0px;top:415.5px;width:1142.0px;height:1.5px;background:#e6e6e6"></div>
<svg style="left:411px;top:432px" width="33" height="30" viewBox="0 0 33 30"><path d="M5,1 L26,1 L32,15 L26,29 L5,29 A4,4 0 0 1 1,25 L1,5 A4,4 0 0 1 5,1 Z" fill="#2f86cf"/><circle cx="14.5" cy="15" r="9" fill="none" stroke="#fff" stroke-width="2.2"/><polyline points="14,9.5 14,15.5 18,19" fill="none" stroke="#fff" stroke-width="2.2"/></svg>
<div class="a" style="left:451.0px;top:432.5px;width:832.0px;height:30.3px;background:#f3f3f3;border:1px solid #e2e2e2;border-radius:3px"></div>
<div class="a" style="left:491.5px;top:433.5px;width:1.0px;height:28.5px;background:#e0e0e0"></div>
<div class="a" style="left:534.0px;top:433.5px;width:1.0px;height:28.5px;background:#e0e0e0"></div>
<div class="a" style="left:574.0px;top:433.5px;width:1.0px;height:28.5px;background:#e0e0e0"></div>
<div class="a" style="left:1032.5px;top:433.5px;width:1.0px;height:28.5px;background:#e0e0e0"></div>
<div class="a" style="left:1179.5px;top:433.5px;width:1.0px;height:28.5px;background:#e0e0e0"></div>
<svg style="left:464px;top:439px" width="17" height="18" viewBox="0 0 17 18"><rect x="1.5" y="3" width="14" height="13.5" fill="none" stroke="#5a5a5a" stroke-width="2"/><rect x="1.5" y="3" width="14" height="3.5" fill="#5a5a5a"/><rect x="4" y="0.5" width="2" height="3" fill="#5a5a5a"/><rect x="11" y="0.5" width="2" height="3" fill="#5a5a5a"/><polyline points="5,11 7.5,13.5 12,9" fill="none" stroke="#3b89c6" stroke-width="1.6"/></svg>
<svg style="left:504px;top:439px" width="18" height="18" viewBox="0 0 18 18"><circle cx="9" cy="9" r="7.6" fill="none" stroke="#5a5a5a" stroke-width="1.8"/><polyline points="8.5,4.5 8.5,9.5 11.5,12" fill="none" stroke="#3b89c6" stroke-width="1.6"/></svg>
<svg style="left:545px;top:440px" width="17" height="16" viewBox="0 0 17 16"><g fill="#5a5a5a"><rect x="0" y="1.5" width="16" height="1.8"/><rect x="0" y="7" width="16" height="1.8"/><rect x="0" y="12.5" width="16" height="1.8"/><rect x="10" y="0" width="2.2" height="4.8"/><rect x="4" y="5.5" width="2.2" height="4.8"/><rect x="10" y="11" width="2.2" height="4.8"/></g></svg>
<svg style="left:609px;top:440px" width="12" height="17"><polyline points="9.5,1.5 2.5,8.2 9.5,15" fill="none" stroke="#555" stroke-width="2.3"/></svg>
<svg style="left:839px;top:440px" width="12" height="17"><polyline points="2.5,1.5 9.5,8.2 2.5,15" fill="none" stroke="#555" stroke-width="2.3"/></svg>
<div class="a" style="left:631.0px;top:438.4px;width:82.0px;height:19.4px;background:#fff;border:1px solid #dcdcdc;border-radius:3px"></div>
<div class="a" style="left:746.3px;top:438.4px;width:83.2px;height:19.4px;background:#fff;border:1px solid #dcdcdc;border-radius:3px"></div>
<div class="t" style="left:658.5px;top:442.5px;font-size:11.2px;color:#8a8a8a;font-style:italic">6/1/21</div>
<div class="t" style="left:768.4px;top:442.5px;font-size:11.2px;color:#8a8a8a;font-style:italic">11/30/21</div>
<div class="a" style="left:722.0px;top:447.3px;width:16.0px;height:2.0px;background:#555"></div>
<svg style="left:1038px;top:441px" width="19" height="14" viewBox="0 0 19 14"><rect x="0.5" y="0" width="2" height="14" fill="#5a5a5a"/><rect x="16.5" y="0" width="2" height="14" fill="#5a5a5a"/><rect x="4" y="6.2" width="11" height="1.6" fill="#3b89c6"/><polygon points="3,7 6,4.5 6,9.5" fill="#3b89c6"/><polygon points="16,7 13,4.5 13,9.5" fill="#3b89c6"/></svg>
<div class="t" style="left:1078.0px;top:440.4px;font-size:13.1px;color:#7a7a7a;">Month</div>
<svg style="left:1154.0px;top:446.0px" width="11" height="7"><polygon points="0,0 10,0 5,6" fill="#555"/></svg>
<svg style="left:1190px;top:439px" width="19" height="17" viewBox="0 0 19 17"><rect x="0.5" y="7" width="2.5" height="7" fill="#3b89c6"/><rect x="4.5" y="1" width="2.5" height="13" fill="#3b89c6"/><rect x="8.5" y="4" width="2.5" height="10" fill="#3b89c6"/><text x="10" y="17" font-size="9" font-weight="bold" fill="#444" font-family="Liberation Sans">#</text></svg>
<div class="t" style="left:1227.7px;top:440.4px;font-size:13.1px;color:#7a7a7a;">6</div>
<svg style="left:1257.6px;top:446.0px" width="11" height="7"><polygon points="0,0 10,0 5,6" fill="#555"/></svg>
<div class="a" style="left:1324.8px;top:432.4px;width:222.2px;height:28.6px;background:#e3e3e3;border-radius:14px"></div>
<svg style="left:1337px;top:441px" width="16" height="12" viewBox="0 0 16 12"><rect x="0" y="2" width="3" height="8" fill="#555"/><rect x="4" y="0" width="8" height="12" fill="#555"/><rect x="13" y="2" width="3" height="8" fill="#555"/><rect x="7.5" y="0" width="1" height="12" fill="#888"/></svg>
<div class="t" style="left:1362.6px;top:439.5px;font-size:13.1px;color:#7a7a7a;">Allocations / Assignments</div>
<svg style="left:1528.0px;top:445.5px" width="11" height="7"><polygon points="0,0 10,0 5,6" fill="#555"/></svg>
<div class="a" style="left:412.5px;top:497.0px;width:1140.5px;height:224.0px;border:1.5px solid #e2e2e2;border-radius:4px;background:#fff"></div>
<svg style="left:0;top:0" width="2000" height="1136" viewBox="0 0 2000 1136">
<rect x="508.5" y="524.90" width="830" height="1.3" fill="#e6e6e6"/>
<rect x="508.5" y="571.40" width="830" height="1.3" fill="#e6e6e6"/>
<rect x="508.5" y="617.65" width="830" height="1.3" fill="#e6e6e6"/>
<rect x="508.5" y="663" width="830.5" height="1.4" fill="#c8c8c8"/>
<rect x="507.65" y="664" width="1.3" height="10" fill="#c8c8c8"/>
<rect x="623.60" y="664" width="1.3" height="10" fill="#c8c8c8"/>
<rect x="744.00" y="664" width="1.3" height="10" fill="#c8c8c8"/>
<rect x="864.20" y="664" width="1.3" height="10" fill="#c8c8c8"/>
<rect x="980.70" y="664" width="1.3" height="10" fill="#c8c8c8"/>
<rect x="1101.00" y="664" width="1.3" height="10" fill="#c8c8c8"/>
<rect x="1217.40" y="664" width="1.3" height="10" fill="#c8c8c8"/>
<rect x="1338.40" y="664" width="1.3" height="10" fill="#c8c8c8"/>
<polygon points="566.25,595.50 682.50,571.75 806.75,663.60 922.50,663.60 1037.00,663.60 1159.00,663.60 1277.30,663.60 1277.30,663.6 566.25,663.6" fill="#65a7dd"/>
<polyline points="566.25,595.50 682.50,571.75 806.75,663.60 922.50,663.60 1037.00,663.60 1159.00,663.60 1277.30,663.60" fill="none" stroke="#3f8fd2" stroke-width="2"/>
<polygon points="566.25,610.60 682.50,571.75 806.75,663.60 922.50,663.60 1037.00,663.60 1159.00,663.60 1277.30,663.60 1277.30,663.6 566.25,663.6" fill="#7dc470"/>
<polyline points="566.25,610.60 682.50,571.75 806.75,663.60 922.50,663.60 1037.00,663.60 1159.00,663.60 1277.30,663.60" fill="none" stroke="#5cae4c" stroke-width="2"/>
<polyline points="566.25,655.00 682.50,663.60 806.75,663.60 922.50,663.60 1037.00,663.60 1159.00,652.60 1277.30,630.00" fill="none" stroke="#8c1d9c" stroke-width="1.8"/>
<polyline points="566.25,663.6 1277.30,663.6" fill="none" stroke="#f07b34" stroke-width="1.5"/>
<circle cx="566.25" cy="595.50" r="4.5" fill="#3f8fd2"/>
<circle cx="682.50" cy="571.75" r="4.5" fill="#3f8fd2"/>
<circle cx="806.75" cy="663.60" r="4.5" fill="#3f8fd2"/>
<circle cx="922.50" cy="663.60" r="4.5" fill="#3f8fd2"/>
<circle cx="1037.00" cy="663.60" r="4.5" fill="#3f8fd2"/>
<circle cx="1159.00" cy="663.60" r="4.5" fill="#3f8fd2"/>
<circle cx="1277.30" cy="663.60" r="4.5" fill="#3f8fd2"/>
<polygon points="561.25,610.60 566.25,605.60 571.25,610.60 566.25,615.60" fill="#5cae4c"/>
<circle cx="682.50" cy="571.75" r="4.5" fill="#5cae4c"/>
<circle cx="806.75" cy="663.60" r="4.5" fill="#5cae4c"/>
<circle cx="922.50" cy="663.60" r="4.5" fill="#5cae4c"/>
<circle cx="1037.00" cy="663.60" r="4.5" fill="#5cae4c"/>
<circle cx="1159.00" cy="663.60" r="4.5" fill="#5cae4c"/>
<circle cx="1277.30" cy="663.60" r="4.5" fill="#5cae4c"/>
<rect x="561.75" y="650.50" width="9" height="9" fill="#8c1d9c"/>
<rect x="678.00" y="659.10" width="9" height="9" fill="#8c1d9c"/>
<rect x="802.25" y="659.10" width="9" height="9" fill="#8c1d9c"/>
<rect x="918.00" y="659.10" width="9" height="9" fill="#8c1d9c"/>
<rect x="1032.50" y="659.10" width="9" height="9" fill="#8c1d9c"/>
<rect x="1154.50" y="648.10" width="9" height="9" fill="#8c1d9c"/>
<rect x="1272.80" y="625.50" width="9" height="9" fill="#8c1d9c"/>
<polygon points="562.75,666.8 569.75,666.8 566.25,660.3" fill="#f07b34"/>
<polygon points="679.00,666.8 686.00,666.8 682.50,660.3" fill="#f07b34"/>
<polygon points="803.25,666.8 810.25,666.8 806.75,660.3" fill="#f07b34"/>
<polygon points="919.00,666.8 926.00,666.8 922.50,660.3" fill="#f07b34"/>
<polygon points="1033.50,666.8 1040.50,666.8 1037.00,660.3" fill="#f07b34"/>
<polygon points="1155.50,666.8 1162.50,666.8 1159.00,660.3" fill="#f07b34"/>
<polygon points="1273.80,666.8 1280.80,666.8 1277.30,660.3" fill="#f07b34"/>
</svg>
<div class="t" style="left:191.0px;width:300px;text-align:right;top:522.2px;font-size:12.9px;color:#909090;">1,500.00</div>
<div class="t" style="left:191.0px;width:300px;text-align:right;top:568.7px;font-size:12.9px;color:#909090;">1,000.00</div>
<div class="t" style="left:191.0px;width:300px;text-align:right;top:614.9px;font-size:12.9px;color:#909090;">500.00</div>
<div class="t" style="left:191.0px;width:300px;text-align:right;top:660.3px;font-size:12.9px;color:#909090;">0.00</div>
<div class="t" style="left:508.2px;top:676.9px;font-size:12.2px;color:#909090;">Jun '21</div>
<div class="t" style="left:624.2px;top:676.9px;font-size:12.2px;color:#909090;">Jul '21</div>
<div class="t" style="left:744.6px;top:676.9px;font-size:12.2px;color:#909090;">Aug '21</div>
<div class="t" style="left:864.8px;top:676.9px;font-size:12.2px;color:#909090;">Sep '21</div>
<div class="t" style="left:981.3px;top:676.9px;font-size:12.2px;color:#909090;">Oct '21</div>
<div class="t" style="left:1101.6px;top:676.9px;font-size:12.2px;color:#909090;">Nov '21</div>
<div class="t" style="left:1218.0px;top:676.9px;font-size:12.2px;color:#909090;">Dec '21</div>
<div class="t" style="left:1339.0px;top:676.9px;font-size:12.2px;color:#909090;">Jan '22</div>
<div class="a" style="left:1352.1px;top:537.6px;width:170.5px;height:73.6px;background:#f3f3f3;border-radius:3px"></div>
<div class="a" style="left:1367.3px;top:549.5px;width:13.7px;height:12.5px;background:#3f8fd2;border-radius:3px"></div>
<div class="a" style="left:1367.3px;top:563.5px;width:13.7px;height:12.5px;background:#5cae4c;border-radius:3px"></div>
<svg style="left:1364px;top:578px" width="20" height="24"><rect x="0.5" y="5.2" width="19" height="1.8" fill="#8c1d9c"/><rect x="6" y="2" width="8" height="8" fill="#8c1d9c"/><rect x="0.5" y="18.8" width="19" height="1.8" fill="#f07b34"/><polygon points="5.5,23 14.5,23 10,15.5" fill="#f07b34"/></svg>
<div class="t" style="left:1389.2px;top:550.2px;font-size:13.1px;color:#909090;">Soft Allocated Effort</div>
<div class="t" style="left:1389.2px;top:563.7px;font-size:13.1px;color:#909090;">Hard Allocated Effort</div>
<div class="t" style="left:1389.2px;top:577.1px;font-size:13.1px;color:#909090;">Hard Assigned Effort</div>
<div class="t" style="left:1389.2px;top:590.6px;font-size:13.1px;color:#909090;">Soft Assigned Effort</div>
<div class="t" style="left:663.7px;width:300px;text-align:center;top:770.7px;font-size:14.8px;color:#5e6062;">Jun 2021</div>
<div class="t" style="left:798.3px;width:300px;text-align:center;top:770.7px;font-size:14.8px;color:#5e6062;">Jul 2021</div>
<div class="t" style="left:932.8px;width:300px;text-align:center;top:770.7px;font-size:14.8px;color:#5e6062;">Aug 2021</div>
<div class="t" style="left:1067.2px;width:300px;text-align:center;top:770.7px;font-size:14.8px;color:#5e6062;">Sep 2021</div>
<div class="t" style="left:1201.8px;width:300px;text-align:center;top:770.7px;font-size:14.8px;color:#5e6062;">Oct 2021</div>
<div class="t" style="left:1335.8px;width:300px;text-align:center;top:770.7px;font-size:14.8px;color:#5e6062;">Nov 2021</div>
<div class="a" style="left:411.6px;top:805.4px;width:1141.0px;height:31.0px;background:#27659b"></div>
<svg style="left:425px;top:817.4px" width="12" height="9"><polygon points="0.5,0.5 11.5,0.5 6,8.5" fill="#fff"/></svg>
<div class="t" style="left:444.9px;top:814.2px;font-size:13.9px;color:#fff;font-weight:bold;">Department 1.1</div>
<div class="t" style="left:663.7px;width:300px;text-align:center;top:813.5px;font-size:15px;color:#fff;font-weight:bold;">1.00h</div>
<div class="t" style="left:798.3px;width:300px;text-align:center;top:813.5px;font-size:15px;color:#fff;font-weight:bold;">800.00h</div>
<div class="a" style="left:411.6px;top:836.4px;width:1141.0px;height:31.6px;background:#fff;border-left:1px solid #e8e8e8;border-right:1px solid #e8e8e8;border-bottom:1px solid #e8e8e8"></div>
<div class="a" style="left:640.5px;top:836.4px;width:1.0px;height:31.6px;background:#ebebeb"></div>
<div class="a" style="left:746.4px;top:836.4px;width:1.0px;height:31.6px;background:#ebebeb"></div>
<div class="a" style="left:867.2px;top:836.4px;width:1.0px;height:31.6px;background:#ebebeb"></div>
<div class="a" style="left:881.0px;top:836.4px;width:1.0px;height:31.6px;background:#ebebeb"></div>
<div class="a" style="left:1001.0px;top:836.4px;width:1.0px;height:31.6px;background:#ebebeb"></div>
<div class="a" style="left:1015.6px;top:836.4px;width:1.0px;height:31.6px;background:#ebebeb"></div>
<div class="a" style="left:1136.0px;top:836.4px;width:1.0px;height:31.6px;background:#ebebeb"></div>
<div class="a" style="left:1150.0px;top:836.4px;width:1.0px;height:31.6px;background:#ebebeb"></div>
<div class="a" style="left:1270.3px;top:836.4px;width:1.0px;height:31.6px;background:#ebebeb"></div>
<div class="a" style="left:1284.5px;top:836.4px;width:1.0px;height:31.6px;background:#ebebeb"></div>
<div class="a" style="left:1405.3px;top:836.4px;width:1.0px;height:31.6px;background:#ebebeb"></div>
<div class="a" style="left:1419.0px;top:836.4px;width:1.0px;height:31.6px;background:#ebebeb"></div>
<div class="a" style="left:1539.8px;top:836.4px;width:1.0px;height:31.6px;background:#ebebeb"></div>
<div class="t" style="left:450.8px;top:846.2px;font-size:13.7px;color:#666;">Doe, John 21</div>
<div class="t" style="left:661.2px;top:845.3px;font-size:13.5px;color:#3a89c6;font-weight:bold;letter-spacing:0.85px">DETAILS</div>
<div class="t" style="left:656.7px;width:300px;text-align:center;top:846.0px;font-size:14.2px;color:#5e6062;">1.00h</div>
<div class="t" style="left:791.3px;width:300px;text-align:center;top:846.0px;font-size:14.2px;color:#5e6062;">800.00h</div>
<div class="a" style="left:411.6px;top:868.0px;width:1141.0px;height:31.3px;background:#27659b"></div>
<svg style="left:425px;top:880.0px" width="12" height="9"><polygon points="0.5,0.5 11.5,0.5 6,8.5" fill="#fff"/></svg>
<div class="t" style="left:444.9px;top:876.8px;font-size:13.9px;color:#fff;font-weight:bold;">Section 1.1.2</div>
<div class="t" style="left:663.7px;width:300px;text-align:center;top:876.1px;font-size:15px;color:#fff;font-weight:bold;">400.00h</div>
<div class="t" style="left:798.3px;width:300px;text-align:center;top:876.1px;font-size:15px;color:#fff;font-weight:bold;">200.00h</div>
<div class="a" style="left:411.6px;top:899.3px;width:1141.0px;height:32.0px;background:#fff;border-left:1px solid #e8e8e8;border-right:1px solid #e8e8e8;border-bottom:1px solid #e8e8e8"></div>
<div class="a" style="left:640.5px;top:899.3px;width:1.0px;height:32.0px;background:#ebebeb"></div>
<div class="a" style="left:746.4px;top:899.3px;width:1.0px;height:32.0px;background:#ebebeb"></div>
<div class="a" style="left:867.2px;top:899.3px;width:1.0px;height:32.0px;background:#ebebeb"></div>
<div class="a" style="left:881.0px;top:899.3px;width:1.0px;height:32.0px;background:#ebebeb"></div>
<div class="a" style="left:1001.0px;top:899.3px;width:1.0px;height:32.0px;background:#ebebeb"></div>
<div class="a" style="left:1015.6px;top:899.3px;width:1.0px;height:32.0px;background:#ebebeb"></div>
<div class="a" style="left:1136.0px;top:899.3px;width:1.0px;height:32.0px;background:#ebebeb"></div>
<div class="a" style="left:1150.0px;top:899.3px;width:1.0px;height:32.0px;background:#ebebeb"></div>
<div class="a" style="left:1270.3px;top:899.3px;width:1.0px;height:32.0px;background:#ebebeb"></div>
<div class="a" style="left:1284.5px;top:899.3px;width:1.0px;height:32.0px;background:#ebebeb"></div>
<div class="a" style="left:1405.3px;top:899.3px;width:1.0px;height:32.0px;background:#ebebeb"></div>
<div class="a" style="left:1419.0px;top:899.3px;width:1.0px;height:32.0px;background:#ebebeb"></div>
<div class="a" style="left:1539.8px;top:899.3px;width:1.0px;height:32.0px;background:#ebebeb"></div>
<div class="t" style="left:450.8px;top:909.1px;font-size:13.7px;color:#666;">Doe, John 40</div>
<div class="t" style="left:661.2px;top:908.2px;font-size:13.5px;color:#3a89c6;font-weight:bold;letter-spacing:0.85px">DETAILS</div>
<div class="t" style="left:656.7px;width:300px;text-align:center;top:908.9px;font-size:14.2px;color:#5e6062;">200.00h</div>
<div class="t" style="left:791.3px;width:300px;text-align:center;top:908.9px;font-size:14.2px;color:#5e6062;">200.00h</div>
<div class="a" style="left:411.6px;top:931.3px;width:1141.0px;height:31.3px;background:#fff;border-left:1px solid #e8e8e8;border-right:1px solid #e8e8e8;border-bottom:1px solid #e8e8e8"></div>
<div class="a" style="left:640.5px;top:931.3px;width:1.0px;height:31.3px;background:#ebebeb"></div>
<div class="a" style="left:746.4px;top:931.3px;width:1.0px;height:31.3px;background:#ebebeb"></div>
<div class="a" style="left:867.2px;top:931.3px;width:1.0px;height:31.3px;background:#ebebeb"></div>
<div class="a" style="left:881.0px;top:931.3px;width:1.0px;height:31.3px;background:#ebebeb"></div>
<div class="a" style="left:1001.0px;top:931.3px;width:1.0px;height:31.3px;background:#ebebeb"></div>
<div class="a" style="left:1015.6px;top:931.3px;width:1.0px;height:31.3px;background:#ebebeb"></div>
<div class="a" style="left:1136.0px;top:931.3px;width:1.0px;height:31.3px;background:#ebebeb"></div>
<div class="a" style="left:1150.0px;top:931.3px;width:1.0px;height:31.3px;background:#ebebeb"></div>
<div class="a" style="left:1270.3px;top:931.3px;width:1.0px;height:31.3px;background:#ebebeb"></div>
<div class="a" style="left:1284.5px;top:931.3px;width:1.0px;height:31.3px;background:#ebebeb"></div>
<div class="a" style="left:1405.3px;top:931.3px;width:1.0px;height:31.3px;background:#ebebeb"></div>
<div class="a" style="left:1419.0px;top:931.3px;width:1.0px;height:31.3px;background:#ebebeb"></div>
<div class="a" style="left:1539.8px;top:931.3px;width:1.0px;height:31.3px;background:#ebebeb"></div>
<div class="t" style="left:450.8px;top:941.1px;font-size:13.7px;color:#666;">Doe, John 50</div>
<div class="t" style="left:661.2px;top:940.2px;font-size:13.5px;color:#3a89c6;font-weight:bold;letter-spacing:0.85px">DETAILS</div>
<div class="t" style="left:656.7px;width:300px;text-align:center;top:940.9px;font-size:14.2px;color:#5e6062;">200.00h</div>
<div class="a" style="left:411.6px;top:962.6px;width:1141.0px;height:31.2px;background:#27659b"></div>
<svg style="left:425px;top:974.6px" width="12" height="9"><polygon points="0.5,0.5 11.5,0.5 6,8.5" fill="#fff"/></svg>
<div class="t" style="left:444.9px;top:971.4px;font-size:13.9px;color:#fff;font-weight:bold;">Section 3.1.1</div>
<div class="t" style="left:663.7px;width:300px;text-align:center;top:970.7px;font-size:15px;color:#fff;font-weight:bold;">176.00h</div>
<div class="a" style="left:411.6px;top:993.8px;width:1141.0px;height:31.0px;background:#fff;border-left:1px solid #e8e8e8;border-right:1px solid #e8e8e8;border-bottom:1px solid #e8e8e8"></div>
<div class="a" style="left:640.5px;top:993.8px;width:1.0px;height:31.0px;background:#ebebeb"></div>
<div class="a" style="left:746.4px;top:993.8px;width:1.0px;height:31.0px;background:#ebebeb"></div>
<div class="a" style="left:867.2px;top:993.8px;width:1.0px;height:31.0px;background:#ebebeb"></div>
<div class="a" style="left:881.0px;top:993.8px;width:1.0px;height:31.0px;background:#ebebeb"></div>
<div class="a" style="left:1001.0px;top:993.8px;width:1.0px;height:31.0px;background:#ebebeb"></div>
<div class="a" style="left:1015.6px;top:993.8px;width:1.0px;height:31.0px;background:#ebebeb"></div>
<div class="a" style="left:1136.0px;top:993.8px;width:1.0px;height:31.0px;background:#ebebeb"></div>
<div class="a" style="left:1150.0px;top:993.8px;width:1.0px;height:31.0px;background:#ebebeb"></div>
<div class="a" style="left:1270.3px;top:993.8px;width:1.0px;height:31.0px;background:#ebebeb"></div>
<div class="a" style="left:1284.5px;top:993.8px;width:1.0px;height:31.0px;background:#ebebeb"></div>
<div class="a" style="left:1405.3px;top:993.8px;width:1.0px;height:31.0px;background:#ebebeb"></div>
<div class="a" style="left:1419.0px;top:993.8px;width:1.0px;height:31.0px;background:#ebebeb"></div>
<div class="a" style="left:1539.8px;top:993.8px;width:1.0px;height:31.0px;background:#ebebeb"></div>
<div class="t" style="left:450.8px;top:1003.6px;font-size:13.7px;color:#666;">Doe, John 07</div>
<div class="t" style="left:661.2px;top:1002.7px;font-size:13.5px;color:#3a89c6;font-weight:bold;letter-spacing:0.85px">DETAILS</div>
<div class="t" style="left:656.7px;width:300px;text-align:center;top:1003.4px;font-size:14.2px;color:#5e6062;">176.00h</div>
<svg style="left:1640px;top:310px" width="20" height="20"><circle cx="9.8" cy="9.5" r="7.6" fill="#fff" stroke="#5a5a5a" stroke-width="1.8"/></svg>
<div class="t" style="left:1669.7px;top:312.1px;font-size:13.1px;color:#7a7a7a;">Upcoming Events</div>
<svg style="left:1809px;top:310px" width="20" height="20"><circle cx="9.7" cy="9.5" r="7.6" fill="#fff" stroke="#4a94d0" stroke-width="1.9"/><circle cx="9.7" cy="9.5" r="4.3" fill="#3b82c0"/></svg>
<div class="t" style="left:1839.2px;top:312.4px;font-size:12.8px;color:#7a7a7a;">Alerts</div>
<div class="t" style="left:1593.8px;top:359.1px;font-size:17px;color:#58595b;">Requests</div>
<div class="t" style="left:1626.5px;top:398.4px;font-size:13.1px;color:#cccccc;white-space:pre">Unread Notes:  0</div>
<div class="t" style="left:1626.5px;top:432.4px;font-size:13.1px;color:#6e6e6e;white-space:pre">To Do:  2</div>
<div class="t" style="left:1626.5px;top:466.4px;font-size:13.1px;color:#cccccc;white-space:pre">Due Soon:  0</div>
<div class="t" style="left:1626.5px;top:500.4px;font-size:13.1px;color:#6e6e6e;white-space:pre">Overdue:  21</div>
<div class="t" style="left:1626.5px;top:534.4px;font-size:13.1px;color:#cccccc;white-space:pre">To Be Accepted:  0</div>
<div class="t" style="left:1626.5px;top:568.4px;font-size:13.1px;color:#cccccc;white-space:pre">Not Synchronized:  0</div>
<svg style="left:1600px;top:432px" width="17" height="16" viewBox="0 0 17 16"><path d="M1,1.5 A1,1 0 0 1 2,0.5 L11,0.5 L16,5 L16,14.5 A1,1 0 0 1 15,15.5 L2,15.5 A1,1 0 0 1 1,14.5 Z" fill="#f0cd47"/><rect x="4" y="8" width="9" height="1.5" fill="#fbe9a6"/><rect x="4" y="11" width="9" height="1.5" fill="#fbe9a6"/></svg>
<svg style="left:1598px;top:499px" width="20" height="20" viewBox="0 0 20 20"><circle cx="10.3" cy="10.2" r="9.3" fill="#d43a2c"/><rect x="9.1" y="4.5" width="2.4" height="7.5" rx="1" fill="#fff"/><circle cx="10.3" cy="15" r="1.3" fill="#fff"/></svg>
<div class="a" style="left:1577.0px;top:616.0px;width:371.0px;height:1.0px;background:#e8e8e8"></div>
<div class="t" style="left:1593.9px;top:645.7px;font-size:17.4px;color:#58595b;">Allocations</div>
<div class="t" style="left:1626.2px;top:685.5px;font-size:13.1px;color:#6e6e6e;white-space:pre">Unread Notes:  1</div>
<div class="t" style="left:1626.2px;top:719.5px;font-size:13.1px;color:#cccccc;white-space:pre">Underassigned:  0</div>
<div class="t" style="left:1626.2px;top:753.4px;font-size:13.1px;color:#cccccc;white-space:pre">Overassigned:  0</div>
<div class="t" style="left:1626.2px;top:787.4px;font-size:13.1px;color:#6e6e6e;white-space:pre">Not Assigned:  14</div>
<div class="t" style="left:1626.2px;top:821.3px;font-size:13.1px;color:#cccccc;white-space:pre">Not in Project Team:  0</div>
<div class="t" style="left:1626.2px;top:855.3px;font-size:13.1px;color:#6e6e6e;white-space:pre">Recently Created:  4</div>
<div class="t" style="left:1626.2px;top:889.2px;font-size:13.1px;color:#6e6e6e;white-space:pre">Recently Updated:  5</div>
<svg style="left:1599px;top:683px" width="21" height="20" viewBox="0 0 21 20"><path d="M1,4 L17,4 L17,15 L5,15 L1,19 Z" fill="#3b89c6"/><rect x="3.5" y="6.5" width="1.8" height="6" fill="#fff"/><rect x="6.5" y="6.5" width="8" height="1.5" fill="#fff"/><rect x="6.5" y="9.2" width="8" height="1.5" fill="#fff"/><rect x="6.5" y="11.8" width="8" height="1.5" fill="#fff"/><circle cx="16.5" cy="2.8" r="2.3" fill="#d42a2a"/></svg>
<svg style="left:1598px;top:786px" width="21" height="19" viewBox="0 0 21 19"><path d="M10.5,1 L20,18 L1,18 Z" fill="#ea9a3a" stroke="#ea9a3a" stroke-width="1.2" stroke-linejoin="round"/><rect x="9.5" y="7" width="2" height="5.5" fill="#fff"/><rect x="9.5" y="14" width="2" height="2" fill="#fff"/></svg>
<svg style="left:1598px;top:853px" width="21" height="21" viewBox="0 0 21 21"><circle cx="10.4" cy="10.1" r="9.3" fill="#4caa4a"/><rect x="5.2" y="9" width="10.4" height="2.3" fill="#fff"/><rect x="9.25" y="5" width="2.3" height="10.3" fill="#fff"/></svg>
<svg style="left:1598px;top:886px" width="20" height="21" viewBox="0 0 20 21"><path d="M4,14.5 A7,7 0 0 1 10,3.5 L12,3.5" fill="none" stroke="#5aa3db" stroke-width="1.8"/><polygon points="11,0.5 15,3.5 11,6.5" fill="#5aa3db"/><path d="M16,6.5 A7,7 0 0 1 10,17.5 L8,17.5" fill="none" stroke="#5aa3db" stroke-width="1.8"/><polygon points="9,14.5 5,17.5 9,20.5" fill="#5aa3db"/></svg>
<div class="a" style="left:1577.0px;top:960.2px;width:371.0px;height:1.0px;background:#e8e8e8"></div>
<div class="a" style="left:1577.0px;top:1049.5px;width:371.0px;height:4.0px;background:linear-gradient(#f4f4f4,#d6d6d6 70%,#eaeaea)"></div>
<div class="a" style="left:389.5px;top:1066.0px;width:1187.0px;height:36.7px;background:linear-gradient(rgba(230,230,230,0),rgba(225,225,225,.38))"></div>
<div class="a" style="left:1577.0px;top:1060.0px;width:371.0px;height:42.7px;background:linear-gradient(rgba(235,235,235,0),rgba(225,225,225,.35))"></div>
<div class="a" style="left:1530px;top:1060px;width:46px;height:42.7px;overflow:hidden"><div class="a" style="left:8px;top:8px;width:88px;height:88px;border-radius:50%;background:#3a8fd0"></div><div class="a" style="left:25.8px;top:33.4px;width:3px;height:9px;background:#fff"></div><div class="a" style="left:31.2px;top:28px;width:3.4px;height:14px;background:#fff"></div><div class="a" style="left:36.6px;top:35.2px;width:3.4px;height:7px;background:#fff"></div></div>
<div class="t" style="left:1599.6px;top:1074.9px;font-size:14px;color:#3a89c6;font-weight:bold;letter-spacing:0.72px">DASHBOARDS</div>
<div class="a" style="left:1740.3px;top:1070.5px;width:200.6px;height:26.4px;background:#3a8fcf;border-radius:3px"></div>
<div class="t" style="left:1757.4px;top:1075.2px;font-size:14px;color:#fff;font-weight:bold;letter-spacing:0.88px">MANAGE SNAPSHOTS</div>
</body></html>
